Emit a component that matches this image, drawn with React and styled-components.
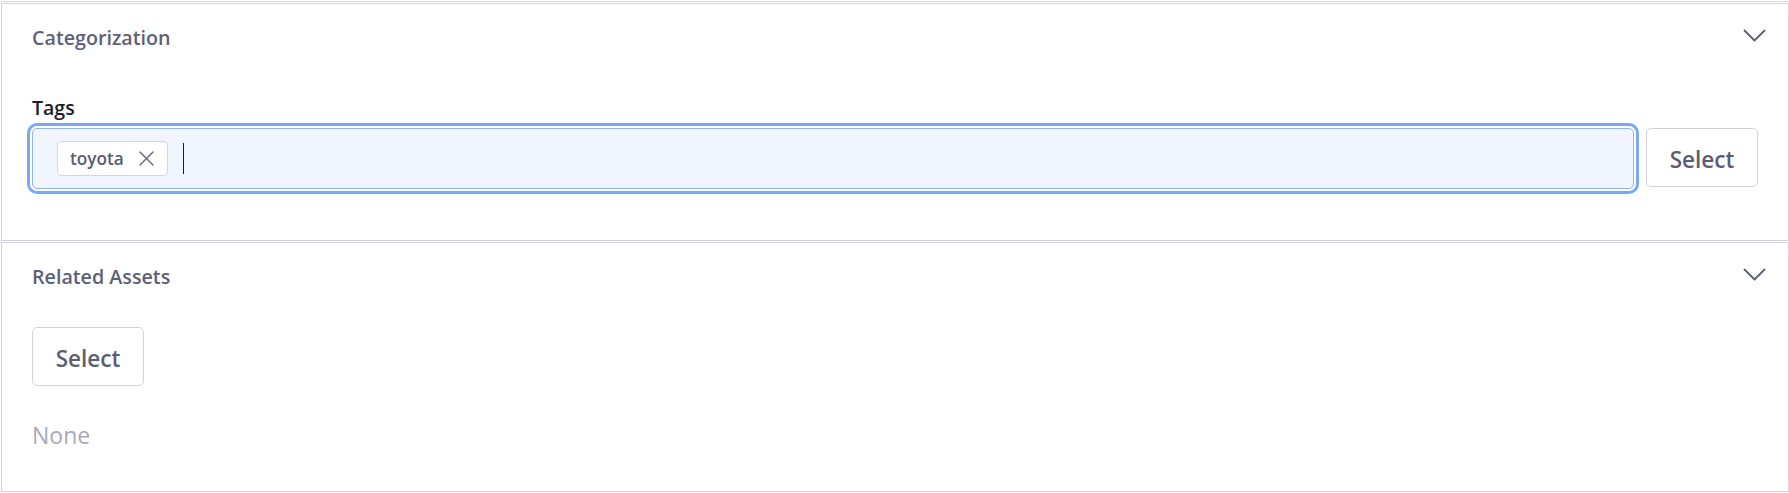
import React from 'react';
import styled, { createGlobalStyle } from 'styled-components';

const GlobalStyle = createGlobalStyle`
  html, body { margin: 0; padding: 0; background: #ffffff; }
  body { font-family: "Open Sans", "Noto Sans", sans-serif; }
  * { box-sizing: border-box; }
`;

const Page = styled.div`
  width: 1789px;
  padding: 1px 0 1px 1px;
  display: flex;
  flex-direction: column;
  gap: 1px;
`;

const TopEdge = styled.div`
  border-bottom: 1px solid #d6d6df;
`;

const Section = styled.section`
  border: 1px solid #d3d3dd;
  display: flex;
  flex-direction: column;
  background: #ffffff;
`;

const Header = styled.div`
  height: 67px;
  padding: 0 22px 0 30px;
  display: flex;
  align-items: center;
  justify-content: space-between;
`;

const HeaderTitle = styled.div`
  font-size: 19.7px;
  font-weight: 600;
  line-height: 28px;
  color: #5e6078;
`;

const Chevron = styled.svg`
  display: block;
  margin-bottom: 4px;
  color: #5e6078;
`;

const Body = styled.div`
  display: flex;
  flex-direction: column;
  align-items: flex-start;
  padding: ${p => p.$pad};
`;

const Label = styled.div`
  font-size: 19.5px;
  font-weight: 600;
  line-height: 28px;
  color: #1b1b29;
  margin-bottom: 6px;
`;

const FieldRow = styled.div`
  display: flex;
  align-items: flex-start;
  gap: 12px;
  align-self: stretch;
`;

const TagInput = styled.div`
  flex: 1;
  height: 61px;
  border: 1px solid #8fb4f7;
  border-radius: 5px;
  background: #f0f5ff;
  box-shadow: 0 0 0 2px #ffffff, 0 0 0 5px #7ba8f6;
  display: flex;
  align-items: center;
  padding-left: 24px;
  gap: 15px;
`;

const Chip = styled.div`
  height: 35px;
  display: flex;
  align-items: center;
  gap: 14px;
  padding: 0 12px;
  border: 1px solid #d5d5df;
  border-radius: 4px;
  background: #ffffff;
  font-size: 17.2px;
  font-weight: 600;
  color: #5b5c70;
`;

const ChipX = styled.svg`
  display: block;
  color: #6b6c80;
`;

const Caret = styled.span`
  width: 1px;
  height: 31px;
  background: #1b1b29;
`;

const Button = styled.button`
  width: 112px;
  height: 59px;
  border: 1px solid #d2d2dc;
  border-radius: 5px;
  background: #ffffff;
  font-family: "Open Sans", "Noto Sans", sans-serif;
  font-size: 22.5px;
  font-weight: 600;
  color: #5c5d73;
  padding: 3px 0 0 0;
  margin-top: ${p => p.$mt || 0}px;
  cursor: pointer;
`;

const Empty = styled.div`
  margin-top: 32px;
  font-size: 23px;
  line-height: 34px;
  color: #a8a9ba;
`;

function ChevronDown() {
  return (
    <Chevron width="23" height="14" viewBox="0 0 23 14" fill="none">
      <polyline points="1.5,1.5 11.5,11.5 21.5,1.5" stroke="currentColor" strokeWidth="1.9" strokeLinecap="round" strokeLinejoin="round" />
    </Chevron>
  );
}

function XIcon() {
  return (
    <ChipX width="17" height="17" viewBox="0 0 17 17" fill="none">
      <path d="M2 2 L15 15 M15 2 L2 15" stroke="currentColor" strokeWidth="1.5" strokeLinecap="round" />
    </ChipX>
  );
}

export default function App() {
  return (
    <>
      <GlobalStyle />
      <Page>
        <TopEdge />
        <Section>
          <Header>
            <HeaderTitle>Categorization</HeaderTitle>
            <ChevronDown />
          </Header>
          <Body $pad="23px 30px 51px 30px">
            <Label>Tags</Label>
            <FieldRow>
              <TagInput>
                <Chip>
                  toyota
                  <XIcon />
                </Chip>
                <Caret />
              </TagInput>
              <Button>Select</Button>
            </FieldRow>
          </Body>
        </Section>
        <Section>
          <Header>
            <HeaderTitle>Related Assets</HeaderTitle>
            <ChevronDown />
          </Header>
          <Body $pad="0 30px 39px 30px">
            <Button $mt={17}>Select</Button>
            <Empty>None</Empty>
          </Body>
        </Section>
      </Page>
    </>
  );
}
